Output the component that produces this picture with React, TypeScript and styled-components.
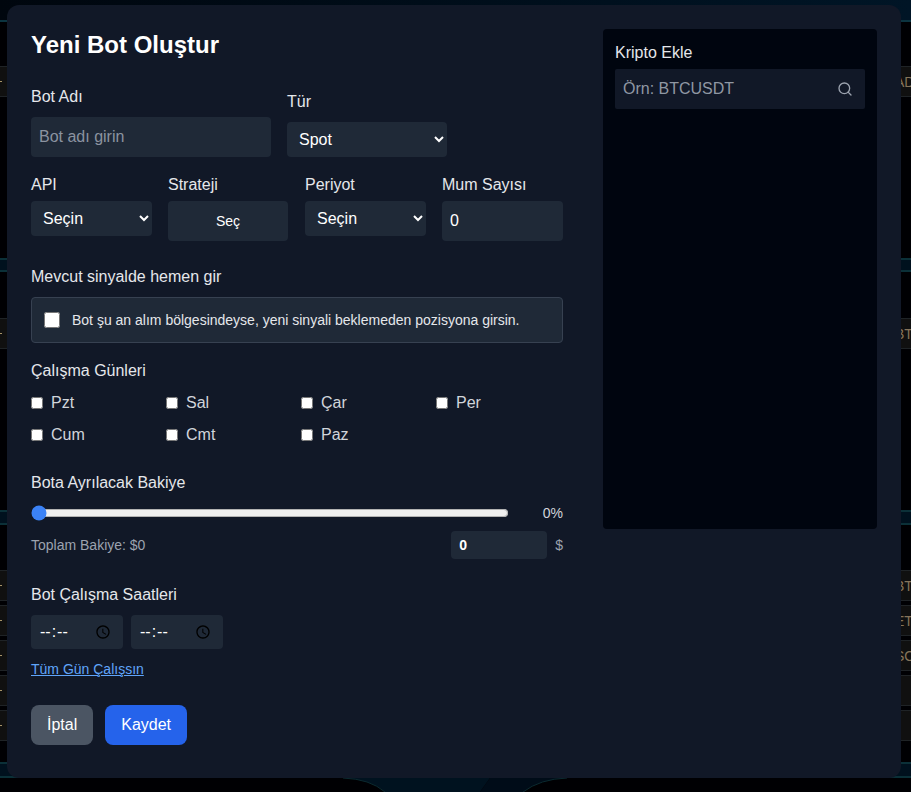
import React from "react";
import styled, { createGlobalStyle } from "styled-components";
import { Search } from "lucide-react";

const Global = createGlobalStyle`
    html, body {
        margin: 0;
        background: #000;
        overflow: hidden;
    }
    * {
        box-sizing: border-box;
    }
`;

const Page = styled.div`
    position: relative;
    width: 911px;
    height: 792px;
    overflow: hidden;
    background: #000003;
    font-family: "Liberation Sans", Arial, sans-serif;
    color: #e5e7eb;
`;

// what is left visible of the dashboard behind the modal
const Backdrop = styled.div`
    display: flex;
    flex-direction: column;
    height: 100%;
`;

const TopBar = styled.div`
    flex: none;
    height: 22px;
    background: linear-gradient(90deg, #00060e, #001526);
    border-bottom: 2px solid #0c3440;
`;

const Band = styled.div<{ $top: number; $height: number }>`
    flex: none;
    margin-top: ${(p) => p.$top}px;
    height: ${(p) => p.$height}px;
    background: #00111e;
    border-top: 2px solid #0b3038;
    border-bottom: 2px solid #0b3038;
`;

const CoinRow = styled.div<{ $top: number }>`
    flex: none;
    display: flex;
    align-items: center;
    justify-content: space-between;
    margin-top: ${(p) => p.$top}px;
    height: 31px;
    background: #101010;
    border-top: 1px solid #1f2326;
    border-bottom: 1px solid #1f2326;
    overflow: hidden;
`;

const Tick = styled.span`
    width: 2px;
    height: 1px;
    background: #a89468;
`;

const Symbol = styled.span`
    width: 16px;
    font-size: 14px;
    color: #85745a;
    white-space: nowrap;
`;

const Ring = styled.svg`
    flex: none;
    display: block;
    margin-top: auto;
`;

const Overlay = styled.div`
    position: absolute;
    inset: 0;
    padding: 5px 10px 14px 7px;
`;

const Modal = styled.div`
    display: flex;
    gap: 40px;
    height: 100%;
    padding: 24px;
    background: #111827;
    border-radius: 12px;
`;

const Form = styled.div`
    flex: 1;
    min-width: 0;
`;

const Title = styled.h2`
    margin: 0 0 24px;
    font-size: 24px;
    line-height: 32px;
    font-weight: 700;
    color: #fff;
`;

const Label = styled.label<{ $gap?: number }>`
    display: block;
    margin-bottom: ${(p) => p.$gap ?? 4}px;
    font-size: 16px;
    line-height: 24px;
    color: #e5e7eb;
`;

const SectionLabel = styled(Label)<{ $top: number }>`
    margin-top: ${(p) => p.$top}px;
`;

const NameRow = styled.div`
    display: flex;
    align-items: flex-end;
    gap: 16px;
`;

const SettingsGrid = styled.div`
    display: grid;
    grid-template-columns: repeat(4, 1fr);
    gap: 16px;
    margin-top: 16px;
    align-items: start;
`;

const TextInput = styled.input<{ $width?: number }>`
    display: block;
    width: ${(p) => (p.$width ? `${p.$width}px` : "100%")};
    height: 40px;
    padding: 8px;
    border: 0;
    border-radius: 4px;
    background: #1f2937;
    color: #fff;
    font: 16px "Liberation Sans", Arial, sans-serif;
    outline: none;
    &::placeholder {
        color: #8b93a0;
    }
`;

const Select = styled.select<{ $width?: number }>`
    display: block;
    width: ${(p) => (p.$width ? `${p.$width}px` : "100%")};
    height: 35px;
    padding: 8px;
    border: 0;
    border-radius: 4px;
    background: #1f2937;
    color: #fff;
    font: 16px "Liberation Sans", Arial, sans-serif;
    outline: none;
`;

const PickButton = styled.button`
    display: block;
    width: 120px;
    height: 40px;
    border: 0;
    border-radius: 4px;
    background: #1f2937;
    color: #fff;
    font: 14px "Liberation Sans", Arial, sans-serif;
`;

const InstantBox = styled.label`
    display: flex;
    align-items: center;
    gap: 12px;
    padding: 12px;
    border: 1px solid #374151;
    border-radius: 4px;
    background: #1f2937;
    font-size: 14px;
    line-height: 20px;
    color: #e5e7eb;
`;

const BigCheck = styled.input`
    width: 16px;
    height: 16px;
    margin: 0;
    flex: none;
`;

const DayGrid = styled.div`
    display: grid;
    grid-template-columns: repeat(4, 1fr);
    gap: 8px;
`;

const Day = styled.label`
    display: flex;
    align-items: center;
    gap: 8px;
    height: 24px;
    font-size: 16px;
    color: #d1d5db;
`;

const DayCheck = styled.input`
    width: 12px;
    height: 12px;
    margin: 0;
    flex: none;
`;

const SliderRow = styled.div`
    display: flex;
    align-items: center;
    gap: 16px;
    height: 20px;
`;

const Slider = styled.input`
    flex: 1;
    min-width: 0;
    height: 16px;
    margin: 0;
    accent-color: #3b82f6;
`;

const Percent = styled.span`
    width: 38px;
    text-align: right;
    font-size: 14px;
    color: #d1d5db;
`;

const BalanceRow = styled.div`
    display: flex;
    align-items: center;
    gap: 8px;
    margin-top: 8px;
    font-size: 14px;
    color: #9ca3af;
`;

const BalanceText = styled.span`
    flex: 1;
`;

const AmountInput = styled.input`
    width: 96px;
    height: 28px;
    padding: 4px 8px;
    border: 0;
    border-radius: 4px;
    background: #1f2937;
    color: #fff;
    font: 700 14px "Liberation Sans", Arial, sans-serif;
    outline: none;
`;

const TimeRow = styled.div`
    display: flex;
    gap: 8px;
`;

const TimeInput = styled.input`
    width: 92px;
    height: 34px;
    padding: 8px;
    border: 0;
    border-radius: 4px;
    background: #1f2937;
    color: #fff;
    font: 16px "Liberation Sans", Arial, sans-serif;
    outline: none;
    &::-webkit-datetime-edit-ampm-field {
        display: none;
    }
`;

const AllDayLink = styled.a`
    display: block;
    margin-top: 10px;
    font-size: 14px;
    line-height: 20px;
    color: #60a5fa;
    text-decoration: underline;
`;

const Actions = styled.div`
    display: flex;
    gap: 12px;
    margin-top: 26px;
`;

const ActionButton = styled.button<{ $primary?: boolean }>`
    height: 40px;
    padding: 0 16px;
    border: 0;
    border-radius: 8px;
    background: ${(p) => (p.$primary ? "#2563eb" : "#4b5563")};
    color: #fff;
    font: 16px "Liberation Sans", Arial, sans-serif;
`;

const CryptoPanel = styled.aside`
    flex: none;
    width: 274px;
    height: 500px;
    padding: 12px;
    border-radius: 4px;
    background: #00050f;
`;

const SearchBox = styled.div`
    display: flex;
    align-items: center;
    height: 40px;
    padding: 0 12px 0 8px;
    border-radius: 2px;
    background: #111827;
    color: #9ca3af;
`;

const SearchInput = styled.input`
    flex: 1;
    min-width: 0;
    padding: 0;
    border: 0;
    background: transparent;
    color: #fff;
    font: 16px "Liberation Sans", Arial, sans-serif;
    outline: none;
    &::placeholder {
        color: #8f97a3;
    }
`;

const DAYS = ["Pzt", "Sal", "Çar", "Per", "Cum", "Cmt", "Paz"];

const App: React.FC = () => {
    return <Page>
        <Global />
        <Backdrop>
            <TopBar />
            <CoinRow $top={44}><Tick /><Symbol>ADA</Symbol></CoinRow>
            <Band $top={161} $height={14} />
            <CoinRow $top={46}><Tick /><Symbol>BTC</Symbol></CoinRow>
            <Band $top={161} $height={15} />
            <CoinRow $top={45}><Tick /><Symbol>BTC</Symbol></CoinRow>
            <CoinRow $top={4}><Tick /><Symbol>ETH</Symbol></CoinRow>
            <CoinRow $top={4}><Tick /><Symbol>SOL</Symbol></CoinRow>
            <CoinRow $top={4}><Tick /></CoinRow>
            <CoinRow $top={4}><Tick /></CoinRow>
            <Band $top={21} $height={16} />
            <Ring width="911" height="14" viewBox="0 0 911 14">
                <path d="M343 0Q370 1 385 14H480L490 0Z" fill="#00121f" />
                <path d="M490 0L480 14H523Q540 1 567 0Z" fill="#000c18" />
                <path d="M343 0Q370 1 385 14M523 14Q540 1 567 0" fill="none" stroke="#0b2a30" strokeWidth="1" />
            </Ring>
        </Backdrop>
        <Overlay>
            <Modal>
                <Form>
                    <Title>Yeni Bot Oluştur</Title>
                    <NameRow>
                        <div>
                            <Label $gap={8}>Bot Adı</Label>
                            <TextInput $width={240} placeholder="Bot adı girin" />
                        </div>
                        <div>
                            <Label $gap={8}>Tür</Label>
                            <Select $width={160}><option>Spot</option></Select>
                        </div>
                    </NameRow>
                    <SettingsGrid>
                        <div>
                            <Label>API</Label>
                            <Select><option>Seçin</option></Select>
                        </div>
                        <div>
                            <Label>Strateji</Label>
                            <PickButton>Seç</PickButton>
                        </div>
                        <div>
                            <Label>Periyot</Label>
                            <Select><option>Seçin</option></Select>
                        </div>
                        <div>
                            <Label>Mum Sayısı</Label>
                            <TextInput type="number" defaultValue={0} />
                        </div>
                    </SettingsGrid>

                    <SectionLabel $top={24} $gap={8}>Mevcut sinyalde hemen gir</SectionLabel>
                    <InstantBox>
                        <BigCheck type="checkbox" />
                        Bot şu an alım bölgesindeyse, yeni sinyali beklemeden pozisyona girsin.
                    </InstantBox>

                    <SectionLabel $top={16} $gap={8}>Çalışma Günleri</SectionLabel>
                    <DayGrid>
                        {DAYS.map((day) => <Day key={day}><DayCheck type="checkbox" />{day}</Day>)}
                    </DayGrid>

                    <SectionLabel $top={24} $gap={8}>Bota Ayrılacak Bakiye</SectionLabel>
                    <SliderRow>
                        <Slider type="range" min={0} max={100} defaultValue={0} />
                        <Percent>0%</Percent>
                    </SliderRow>
                    <BalanceRow>
                        <BalanceText>Toplam Bakiye: $0</BalanceText>
                        <AmountInput type="number" defaultValue={0} />
                        <span>$</span>
                    </BalanceRow>

                    <SectionLabel $top={24} $gap={8}>Bot Çalışma Saatleri</SectionLabel>
                    <TimeRow>
                        <TimeInput type="time" />
                        <TimeInput type="time" />
                    </TimeRow>
                    <AllDayLink href="#">Tüm Gün Çalışsın</AllDayLink>

                    <Actions>
                        <ActionButton>İptal</ActionButton>
                        <ActionButton $primary>Kaydet</ActionButton>
                    </Actions>
                </Form>
                <CryptoPanel>
                    <Label>Kripto Ekle</Label>
                    <SearchBox>
                        <SearchInput placeholder="Örn: BTCUSDT" />
                        <Search size={16} />
                    </SearchBox>
                </CryptoPanel>
            </Modal>
        </Overlay>
    </Page>;
};

export default App;
